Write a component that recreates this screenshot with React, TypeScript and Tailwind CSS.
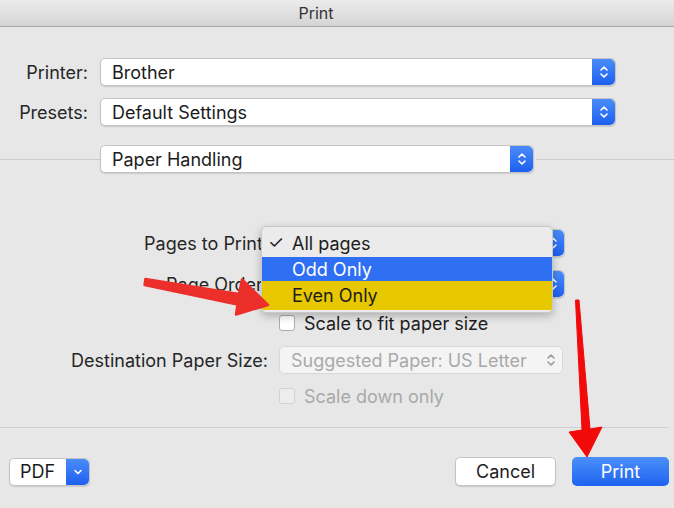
const Stepper = ({ disabled = false }: { disabled?: boolean }) => (
  <div
    className={`w-[23px] h-full flex items-center justify-center rounded-r-[5px] ${
      disabled ? '' : 'bg-gradient-to-b from-[#4a8cf8] to-[#1e5ff0]'
    }`}
  >
    <svg width="10" height="16" viewBox="0 0 10 16" fill="none">
      <path
        d="M2 6L5 3L8 6M2 10L5 13L8 10"
        stroke={disabled ? '#9a9a9a' : '#ffffff'}
        strokeWidth="1.6"
        strokeLinecap="round"
        strokeLinejoin="round"
      />
    </svg>
  </div>
);

const Select = ({ value, className = '' }: { value: string; className?: string }) => (
  <div
    className={`h-[28px] flex items-stretch bg-white border border-[#c4c4c4] rounded-[5px] shadow-[0_1px_1px_rgba(0,0,0,0.12)] ${className}`}
  >
    <div className="flex-1 flex items-center pl-[11px] text-[18px] text-[#1c1c1c]">{value}</div>
    <Stepper />
  </div>
);

const Checkbox = ({ label, disabled = false }: { label: string; disabled?: boolean }) => (
  <div className="flex items-center gap-[9px] h-[16px]">
    <div
      className={`w-[16px] h-[16px] rounded-[3px] border ${
        disabled ? 'border-[#d2d2d2] bg-[#ededed]' : 'border-[#adadad] bg-white'
      }`}
    />
    <span className={`text-[18px] ${disabled ? 'text-[#a9a9a9]' : 'text-[#1c1c1c]'}`}>{label}</span>
  </div>
);

export default function App() {
  return (
    <div className="relative w-[674px] h-[508px] overflow-hidden bg-[#e7e7e7] font-['Inter',sans-serif]">
      {/* Title bar */}
      <div className="h-[27px] flex items-center justify-center pr-[42px] bg-gradient-to-b from-[#ececec] to-[#d4d4d4] border-b border-[#a8a8a8]">
        <span className="text-[16px] text-[#333333]">Print</span>
      </div>

      {/* Printer / Presets */}
      <div className="mt-[31px] grid grid-cols-[88px_516px] gap-x-[12px] gap-y-[12px] items-center">
        <span className="text-right text-[18px] text-[#262626]">Printer:</span>
        <Select value="Brother" />
        <span className="text-right text-[18px] text-[#262626]">Presets:</span>
        <Select value="Default Settings" />
      </div>

      {/* Section popup */}
      <div className="mt-[19px] flex items-center">
        <div className="w-[100px] h-px bg-[#cdcdcd]" />
        <Select value="Paper Handling" className="w-[434px]" />
        <div className="flex-1 ml-[2px] h-px bg-[#cdcdcd]" />
      </div>

      {/* Paper handling options */}
      <div className="mt-[56px] grid grid-cols-[268px_286px] gap-x-[11px] items-center">
        <span className="text-right text-[18px] text-[#262626] whitespace-nowrap">Pages to Print:</span>
        <Select value="" />
        <span className="mt-[13px] text-right text-[18px] text-[#262626]">Page Order:</span>
        <Select value="" className="mt-[13px]" />
        <div />
        <div className="mt-[17px]">
          <Checkbox label="Scale to fit paper size" />
        </div>
        <span className="mt-[15px] text-right text-[18px] text-[#262626] whitespace-nowrap">Destination Paper Size:</span>
        <div className="mt-[15px] w-[284px] h-[28px] flex items-stretch bg-[#f4f4f4] border border-[#d8d8d8] rounded-[5px]">
          <div className="flex-1 flex items-center pl-[11px] text-[18px] text-[#a9a9a9] whitespace-nowrap">Suggested Paper: US Letter</div>
          <Stepper disabled />
        </div>
        <div />
        <div className="mt-[14px]">
          <Checkbox label="Scale down only" disabled />
        </div>
      </div>

      {/* Separator */}
      <div className="mt-[23px] mr-[6px] h-px bg-[#cfcfcf]" />

      {/* Bottom buttons */}
      <div className="mt-[29px] flex items-center pl-[9px] pr-[5px]">
        <div className="w-[81px] h-[28px] flex items-stretch bg-white border border-[#c4c4c4] rounded-[5px] shadow-[0_1px_1px_rgba(0,0,0,0.12)]">
          <div className="flex-1 flex items-center pl-[10px] text-[18px] text-[#1c1c1c]">PDF</div>
          <div className="w-[23px] flex items-center justify-center rounded-r-[5px] bg-gradient-to-b from-[#4a8cf8] to-[#1e5ff0]">
            <svg width="10" height="8" viewBox="0 0 10 8" fill="none">
              <path d="M2 2.5L5 5.5L8 2.5" stroke="#fff" strokeWidth="1.6" strokeLinecap="round" strokeLinejoin="round" />
            </svg>
          </div>
        </div>
        <div className="flex-1" />
        <button className="w-[101px] h-[29px] bg-white border border-[#c4c4c4] rounded-[5px] shadow-[0_1px_1px_rgba(0,0,0,0.12)] text-[18px] text-[#1c1c1c]">
          Cancel
        </button>
        <button className="ml-[16px] w-[97px] h-[29px] rounded-[5px] bg-gradient-to-b from-[#4b8ff9] to-[#1f62f0] text-[18px] text-white">
          Print
        </button>
      </div>

      {/* Open popup menu */}
      <div className="absolute left-[261px] top-[226px] w-[292px] rounded-[5px] bg-[#ebebeb] border border-[#c9c9c9] shadow-[0_3px_8px_rgba(0,0,0,0.25)] overflow-hidden py-[2px]">
        <div className="h-[28px] flex items-center text-[18px] text-[#1c1c1c]">
          <span className="w-[30px] pl-[6px] text-[18px] leading-none">✓</span>
          <span>All pages</span>
        </div>
        <div className="h-[24px] flex items-center pl-[30px] text-[18px] text-white bg-[#2f6ff4]">Odd Only</div>
        <div className="h-[29px] flex items-center pl-[30px] text-[18px] text-[#1c1c1c] bg-[#e6c700]">Even Only</div>
      </div>

      {/* Red annotation arrows */}
      <svg className="absolute left-0 top-0 pointer-events-none" width="674" height="508" viewBox="0 0 674 508">
        <polygon
          points="145.4,279 239,294 242,279.5 268,305 236,314.5 237.5,304.5 144.6,285"
          fill="#ec2f2a"
          stroke="#ec2f2a"
          strokeWidth="2.5"
          strokeLinejoin="round"
        />
        <polygon
          points="575.5,300 579,300 590,429 602,427 587,457 569,432 582,430"
          fill="#f20a0a"
          stroke="#f20a0a"
          strokeWidth="1"
          strokeLinejoin="round"
        />
      </svg>
    </div>
  );
}
